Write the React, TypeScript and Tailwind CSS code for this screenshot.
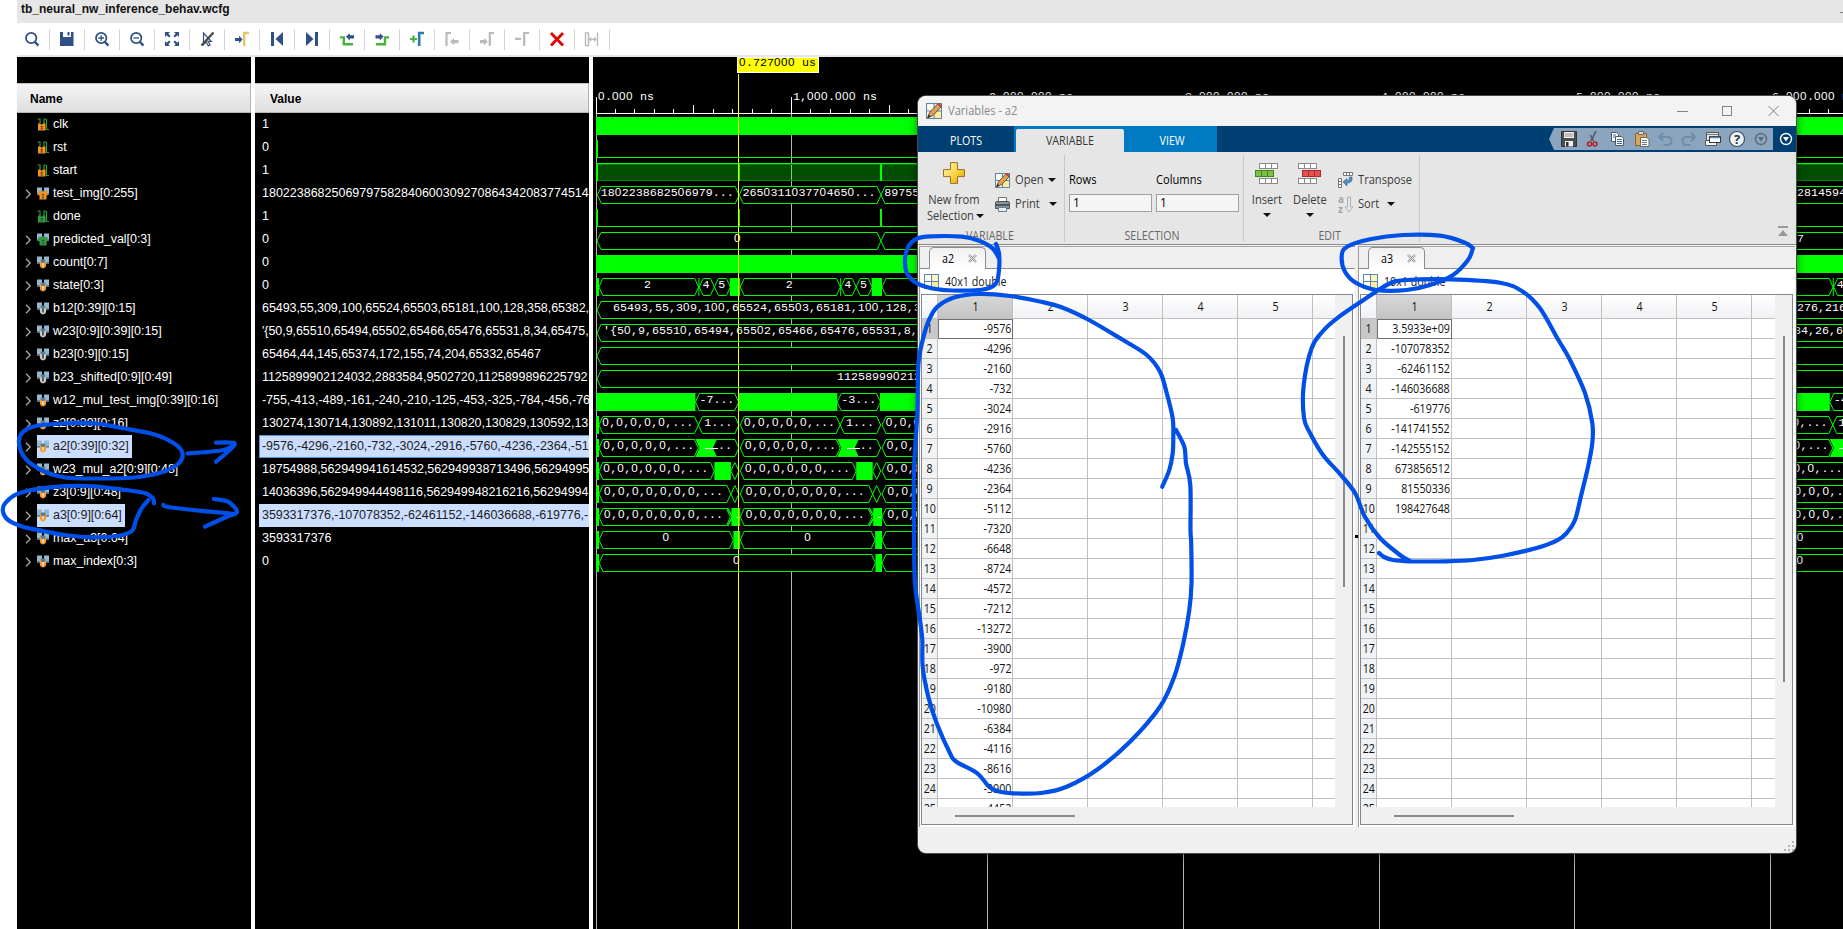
import React from "react";

const GREEN = "#00ff00";

/* ---------- simulator toolbar icons ---------- */

const NAVY = "#2f4f86";
const GREY = "#b9b9b9";

const lens = (
  <>
    <circle cx="7.2" cy="7" r="5.2" fill="none" stroke={NAVY} strokeWidth="1.8" />
    <path d="M11 11l3.4 3.6" stroke={NAVY} strokeWidth="2.4" />
  </>
);

const toolIcons: React.ReactNode[] = [
  lens,
  <>
    <path d="M1 1h3v5h8V1h2.5v14H1z" fill={NAVY} />
    <path d="M8.5 1h2v3.5h-2z" fill={NAVY} />
  </>,
  <>
    {lens}
    <path d="M4.4 7h5.6M7.2 4.2v5.6" stroke={NAVY} strokeWidth="1.3" />
  </>,
  <>
    {lens}
    <path d="M4.4 7h5.6" stroke={NAVY} strokeWidth="1.3" />
  </>,
  <g fill={NAVY}>
    <path d="M1 1h5L4.3 2.7 6.6 5 5 6.6 2.7 4.3 1 6zM15 1v5l-1.7-1.7L11 6.6 9.4 5l2.3-2.3L10 1zM1 15v-5l1.7 1.7L5 9.4 6.6 11l-2.3 2.3L6 15zM15 15h-5l1.7-1.7L9.4 11 11 9.4l2.3 2.3L15 10z" />
  </g>,
  <>
    <path d="M4.5 2v11.5l2.8-2.6 2 4 1.8-.9-2-3.7h3.2z" fill="none" stroke={NAVY} strokeWidth="1.2" />
    <path d="M14.5 1.5L2.5 14.500" stroke="#4a4a4a" strokeWidth="2.400" />
  </>,
  <>
    <path d="M1 7h4V4.8L8.6 8.5 5 12.2V10H1z" fill={NAVY} />
    <path d="M10.2 15V2H15" fill="none" stroke="#e3c766" strokeWidth="2.4" />
  </>,
  <>
    <path d="M2 1h3v14H2z" fill={NAVY} />
    <path d="M14 1v14L6.5 8z" fill={NAVY} />
  </>,
  <>
    <path d="M11 1h3v14h-3z" fill={NAVY} />
    <path d="M2 1v14l7.500-7z" fill={NAVY} />
  </>,
  <>
    <path d="M1 6.400h3.800v6.800H14" fill="none" stroke="#46b43c" strokeWidth="2.4" />
    <path d="M7 5.600l3.800-3.400v2H15v3.200h-4.200v2z" fill={NAVY} />
  </>,
  <>
    <path d="M2 13.200h9V6.400h4" fill="none" stroke="#46b43c" strokeWidth="2.4" />
    <path d="M9.500 5.600L5.800 2.200v2H1.500v3.200h4.300v2z" fill={NAVY} />
  </>,
  <>
    <path d="M1 8h7M4.500 4.600v6.800" stroke="#46b43c" strokeWidth="2.2" />
    <path d="M10.200 15V2H15" fill="none" stroke="#2a7ab5" strokeWidth="2.6" />
  </>,
  <>
    <path d="M2.500 15V2H7" fill="none" stroke={GREY} strokeWidth="2.2" />
    <path d="M6 10.500l4-3.600v2h4.500v3.400H10v2z" fill={GREY} />
  </>,
  <>
    <path d="M10.800 15V2H15" fill="none" stroke={GREY} strokeWidth="2.2" />
    <path d="M8.800 10.500L5 6.900v2H1v3.400h4v2z" fill={GREY} />
  </>,
  <>
    <path d="M10.200 15V2H15M1 7.800h6" fill="none" stroke={GREY} strokeWidth="2.2" />
  </>,
  <path d="M2 2l12 12.500M14 2L2 14.500" stroke="#e60000" strokeWidth="2.800" />,
  <>
    <path d="M1.500 2h3v12.500h-3zM13.500 1.500v13.500" fill="none" stroke={GREY} strokeWidth="1.4" />
    <path d="M5.500 8.300h6M7.300 6.300l-2 2 2 2M10 6.300l2 2-2 2" fill="none" stroke={GREY} strokeWidth="1.2" />
  </>,
];

function Toolbar() {
  return (
    <div className="flex h-[32px] shrink-0 items-center bg-white">
      {toolIcons.map((icon, i) => (
        <div
          key={i}
          className={`flex h-[21px] shrink-0 items-center justify-center border-r border-[#d4d4d4] ${i === 0 ? "w-[33px] pr-[3px]" : "w-[35px]"}`}
        >
          <svg width="16" height="16" viewBox="0 0 16 16">
            {icon}
          </svg>
        </div>
      ))}
    </div>
  );
}

/* ---------- signal list ---------- */

type Kind = "in" | "out" | "busIn" | "busOut" | "busReg" | "busConst";

interface Signal {
  name: string;
  value: string;
  kind: Kind;
  selected?: boolean;
}

const signals: Signal[] = [
  { name: "clk", value: "1", kind: "in" },
  { name: "rst", value: "0", kind: "in" },
  { name: "start", value: "1", kind: "in" },
  { name: "test_img[0:255]", value: "18022386825069797582840600309270864342083774514", kind: "busIn" },
  { name: "done", value: "1", kind: "out" },
  { name: "predicted_val[0:3]", value: "0", kind: "busOut" },
  { name: "count[0:7]", value: "0", kind: "busReg" },
  { name: "state[0:3]", value: "0", kind: "busReg" },
  { name: "b12[0:39][0:15]", value: "65493,55,309,100,65524,65503,65181,100,128,358,65382,", kind: "busConst" },
  { name: "w23[0:9][0:39][0:15]", value: "'{50,9,65510,65494,65502,65466,65476,65531,8,34,65475,", kind: "busConst" },
  { name: "b23[0:9][0:15]", value: "65464,44,145,65374,172,155,74,204,65332,65467", kind: "busConst" },
  { name: "b23_shifted[0:9][0:49]", value: "1125899902124032,2883584,9502720,1125899896225792", kind: "busConst" },
  { name: "w12_mul_test_img[0:39][0:16]", value: "-755,-413,-489,-161,-240,-210,-125,-453,-325,-784,-456,-76", kind: "busReg" },
  { name: "z2[0:39][0:16]", value: "130274,130714,130892,131011,130820,130829,130592,13", kind: "busReg" },
  { name: "a2[0:39][0:32]", value: "-9576,-4296,-2160,-732,-3024,-2916,-5760,-4236,-2364,-51", kind: "busReg", selected: true },
  { name: "w23_mul_a2[0:9][0:48]", value: "18754988,562949941614532,562949938713496,56294995", kind: "busReg" },
  { name: "z3[0:9][0:48]", value: "14036396,562949944498116,562949948216216,56294994", kind: "busReg" },
  { name: "a3[0:9][0:64]", value: "3593317376,-107078352,-62461152,-146036688,-619776,-", kind: "busReg", selected: true },
  { name: "max_a3[0:64]", value: "3593317376", kind: "busReg" },
  { name: "max_index[0:3]", value: "0", kind: "busReg" },
];

function SignalIcon({ kind }: { kind: Kind }) {
  if (kind === "in" || kind === "out") {
    const fill = kind === "in" ? "#f2921d" : "#2f9a3f";
    return (
      <svg width="12" height="13" viewBox="0 0 12 13" className="shrink-0">
        <path d="M0.500 1H3v5M6.500 1h2.500M7 7V1M9.500 1v10.500H12" fill="none" stroke="#2f9a3f" strokeWidth="1.200" />
        <path d="M1 5.500h2l1 1h1l1-1h2.500v7H1z" fill={fill} />
        <path d="M3.500 8.500h2.500M4.750 8.500v2.500M3.500 11h2.500" stroke="#3a3a3a" strokeWidth=".8" />
      </svg>
    );
  }
  return (
    <svg width="12" height="13" viewBox="0 0 12 13" className="shrink-0">
      <path d="M0 .5h5v7H0zM7 .5h5v7H7z" fill="#93b8d0" />
      <path d="M0 6h3v1.500H0zM9 6h3v1.500H9zM4 3.500h4V5H4z" fill="#66818f" />
      {(kind === "busIn" || kind === "busOut") && (
        <>
          <path d="M1.500 4h3l1 1h1l1-1h3v4.500H9.500v4h-7v-4h-1z" fill={kind === "busIn" ? "#f2921d" : "#2f9a3f"} />
          <path d="M4.800 7.500h2.400M6 7.500V11M4.800 11h2.400" stroke="#3f3f3f" strokeWidth=".8" />
        </>
      )}
      {(kind === "busReg" || kind === "busConst") && (
        <>
          <ellipse cx="6" cy="8.600" rx="3.200" ry="3.800" fill={kind === "busReg" ? "#f09a35" : "#c9c9c9"} />
          <path d="M3 4.500h6L6 8z" fill="#5f7480" />
          <rect x="5.200" y="7" width="1.600" height="3.500" fill={kind === "busReg" ? "#ffdfa8" : "#444"} />
        </>
      )}
    </svg>
  );
}

function HeaderCell({ label, pad }: { label: string; pad: string }) {
  return (
    <div
      className={`flex h-[30px] shrink-0 items-center border-t border-r border-b border-t-[#c4c4c4] border-r-[#b5b5b5] border-b-[#b5b5b5] bg-linear-to-b from-[#f4f4f4] to-[#dfdfe1] pt-[2px] text-[12px] font-bold text-black ${pad}`}
    >
      {label}
    </div>
  );
}

function SignalNames() {
  return (
    <div className="flex w-[234px] shrink-0 flex-col bg-black pt-[26px]">
      <HeaderCell label="Name" pad="pl-[13px]" />
      {signals.map((s) => (
        <div key={s.name} className="flex h-[23px] shrink-0 items-center pl-[8px]">
          <svg width="7" height="10" viewBox="0 0 7 10" className="mr-[5px] shrink-0">
            {s.kind !== "in" && s.kind !== "out" && (
              <path d="M1 .8L5.200 5 1 9.200" fill="none" stroke="#a8a8a8" strokeWidth="1.300" />
            )}
          </svg>
          <div
            className={`flex h-[23px] items-center pr-[3px] text-[12.5px] tracking-[-0.06px] whitespace-nowrap ${s.selected ? "bg-[#ccdeff] text-[#1c1c1c]" : "text-white"}`}
          >
            <SignalIcon kind={s.kind} />
            <span className="ml-[4px]">{s.name}</span>
          </div>
        </div>
      ))}
    </div>
  );
}

function SignalValues() {
  return (
    <div className="flex w-[334px] shrink-0 flex-col overflow-hidden bg-black pt-[26px]">
      <HeaderCell label="Value" pad="pl-[15px]" />
      {signals.map((s, i) => (
        <div
          key={s.name}
          className={`ml-[4px] flex h-[23px] shrink-0 items-center overflow-hidden text-[12.5px] whitespace-nowrap ${
            s.value.includes(",") ? "tracking-[-0.06px]" : ""
          } ${s.selected ? "bg-[#ccdeff] text-[#1c1c1c]" : "text-white"} ${
            i === 14 ? "border border-r-0 border-[#4f94d4] pl-[2px]" : "pl-[3px]"
          }`}
        >
          {s.value}
        </div>
      ))}
    </div>
  );
}

/* ---------- waveform ---------- */

const laneTop = (i: number) => 117 + 23 * i;
const cycle = (k: number) => 597.4 + 141.800 * k;
const cycles = [0, 1, 2, 3, 4, 5, 6, 7, 8];

function Mono({ x, y, children, fill = "#fff" }: { x: number; y: number; children: string; fill?: string }) {
  return (
    <text x={x} y={y} fill={fill} fontSize="11.667" fontFamily="'Liberation Mono', monospace" xmlSpace="preserve">
      {children.split(/(0+)/).map((part, i) =>
        part.startsWith("0") ? (
          <tspan key={i} fontFamily="'Liberation Sans', sans-serif" fontSize="11.667" letterSpacing="0.512">
            {part}
          </tspan>
        ) : (
          part
        ),
      )}
    </text>
  );
}

function Hex({ lane, a, b, label, at }: { lane: number; a: number; b: number; label?: string; at?: number }) {
  const t = laneTop(lane) + 0.5;
  const bt = t + 17;
  const m = t + 8.5;
  const s = Math.min(4, (b - a) / 2);
  return (
    <>
      <path
        d={`M${a} ${m}L${a + s} ${t}H${b - s}L${b} ${m}L${b - s} ${bt}H${a + s}Z`}
        fill="#000"
        stroke={GREEN}
        strokeWidth="1"
      />
      {label && (
        <Mono x={at ?? a + 4} y={laneTop(lane) + 10}>
          {label}
        </Mono>
      )}
    </>
  );
}

function Block({ lane, a, b }: { lane: number; a: number; b: number }) {
  return <rect x={a} y={laneTop(lane)} width={b - a} height="18" fill={GREEN} />;
}

const imgLabels = ["1802238682506979...", "2650311037704650...", "8975580361244107..."];

function Cycle({ k }: { k: number }) {
  const c = cycle(k);
  const n = cycle(k + 1);
  const h = c + (k === 0 ? 1.5 : 1);
  const w = (o: number) => c + o;
  return (
    <>
      <Hex lane={3} a={c} b={n} label={imgLabels[k]} at={c + 3.3} />

      <Hex lane={7} a={h} b={w(101.300)} label="2" at={w(46.5)} />
      <Hex lane={7} a={w(101.800)} b={w(117)} label="4" at={w(105)} />
      <Hex lane={7} a={w(117)} b={w(133)} label="5" at={w(120.800)} />
      <rect x={w(101)} y={laneTop(7)} width="1" height="18" fill={GREEN} />
      <Block lane={7} a={w(132.5)} b={n + 1} />

      <Block lane={12} a={c - 1} b={w(98)} />
      <Hex lane={12} a={w(98)} b={n - 0.5} label={k === 0 ? "-7..." : k === 8 ? "-4..." : "-3..."} at={w(102)} />

      <Hex lane={13} a={h} b={w(101)} label="0,0,0,0,0,..." at={w(4.800)} />
      <Hex lane={13} a={w(101)} b={n - 0.3} label="1..." at={w(106.800)} />

      <Hex lane={14} a={h} b={w(101)} label="0,0,0,0,0,..." at={w(5.800)} />
      <Hex lane={14} a={w(115)} b={n - 0.3} label=".." at={w(120.500)} />
      <path
        d={`M${w(98)} ${laneTop(14)}H${w(119)}L${w(115)} ${laneTop(14) + 9}L${w(119)} ${laneTop(14) + 18}H${w(98)}L${w(102)} ${laneTop(14) + 9}Z`}
        fill={GREEN}
      />
      <rect x={Math.round(w(107.5))} y={laneTop(14) + 9} width="13" height="1" fill="#fff" />

      <Hex lane={15} a={h} b={w(117)} label="0,0,0,0,0,0,..." at={w(5.800)} />
      <Block lane={15} a={w(117)} b={w(133.5)} />
      <Hex lane={15} a={w(133.5)} b={n - 0.3} />

      <Hex lane={16} a={h} b={w(133.5)} label="0,0,0,0,0,0,0,..." at={w(6.600)} />
      <Hex lane={16} a={w(133.5)} b={n - 0.3} />

      <Hex lane={17} a={h} b={w(133)} label="0,0,0,0,0,0,0,..." at={w(6.600)} />
      <path
        d={`M${w(130)} ${laneTop(17)}L${w(135)} ${laneTop(17) + 9}L${w(130)} ${laneTop(17) + 18}`}
        fill="none"
        stroke={GREEN}
        strokeWidth="1.500"
      />
      <Block lane={17} a={w(134)} b={n + 1} />
      <rect x={w(139)} y={laneTop(17) + 9} width="2.500" height="1" fill="#fff" />

      <Hex lane={18} a={h} b={w(136)} label="0" at={w(65)} />
      <Block lane={18} a={w(136)} b={n + 1} />
    </>
  );
}

function Waveform() {
  const full = 1850;
  return (
    <svg width="1250" height="872" viewBox="593 57 1250 872" className="block shrink-0 bg-black">
      {[0, 1, 2, 3, 4, 5, 6].map((i) => {
        const x = Math.floor(596.2 + 195.700 * i);
        return (
          <g key={i}>
            <rect x={x} y="114" width="1" height="815" fill="#b4b4b4" />
            <rect x={x} y="97" width="1" height="17" fill="#fff" />
            <Mono x={x + 2} y={100}>{i === 0 ? "0.000 ns" : `${i},000.000 ns`}</Mono>
            {[1, 2, 3, 4, 5, 6, 7, 8, 9].map((j) => (
              <rect
                key={j}
                x={Math.floor(595.700 + 195.700 * i + 19.570 * j)}
                y={j === 5 ? 105 : 109}
                width="1"
                height={j === 5 ? 8 : 4}
                fill="#fff"
              />
            ))}
          </g>
        );
      })}
      <rect x="596" y="113" width="1247" height="1" fill="#fff" />

      <Block lane={0} a={596} b={full} />

      <Block lane={1} a={596} b={598} />
      <rect x="596" y={laneTop(1) + 17} width={full} height="1" fill={GREEN} />

      <rect x="598" y={laneTop(2)} width={full} height="18" fill={GREEN} fillOpacity="0.3" />
      <rect x="598" y={laneTop(2) + 1} width={full} height="1" fill="#008a00" />
      <rect x="598" y={laneTop(2) + 17} width={full} height="1" fill="#008a00" />
      <rect x="598" y={laneTop(2)} width={full} height="1" fill={GREEN} />
      <Block lane={2} a={596} b={598} />

      <Block lane={4} a={596} b={598} />
      <rect x="596" y={laneTop(4) + 17} width={full} height="1" fill={GREEN} />
      {cycles.slice(1).map((k) => (
        <g key={k}>
          <Block lane={2} a={Math.round(cycle(k)) - (k === 1 ? 0 : 1)} b={Math.round(cycle(k)) + 1} />
          <Block lane={4} a={Math.round(cycle(k)) - (k === 1 ? 0 : 1)} b={Math.round(cycle(k)) + 1} />
        </g>
      ))}

      <Block lane={6} a={596} b={full} />

      {cycles.map((k) => (
        <Cycle key={k} k={k} />
      ))}
      <Mono x={1797} y={laneTop(3) + 10}>2814594</Mono>

      <Hex lane={5} a={597} b={cycle(2)} label="0" at={734} />
      <Hex lane={5} a={cycle(2)} b={full} label="7" at={1797} />

      <Hex lane={8} a={597} b={full} label="65493,55,309,100,65524,65503,65181,100,128,358,6" at={613} />
      <Mono x={1797} y={laneTop(8) + 10}>276,216</Mono>
      <Hex lane={9} a={597} b={full} label="'{50,9,65510,65494,65502,65466,65476,65531,8,34" at={603} />
      <Mono x={1794} y={laneTop(9) + 10}>84,26,63</Mono>
      <Hex lane={10} a={597} b={full} />
      <Hex lane={11} a={597} b={full} label="1125899902124032" at={837} />

      <Hex lane={19} a={599} b={875.5} label="0" at={733} />
      <Block lane={19} a={875.5} b={882} />
      <Hex lane={19} a={882} b={full} label="0" at={1796.5} />

      {[7, 13, 14, 15, 16, 17, 18, 19].map((l) => (
        <Block key={l} lane={l} a={596} b={599} />
      ))}

      <rect x="738" y="74" width="1" height="855" fill="#ffff00" />
      <rect x="737.5" y="57.500" width="81" height="15" fill="#ffff00" stroke="#fff" />
      <Mono x={739} y={66} fill="#000">0.727000 us</Mono>
    </svg>
  );
}

/* ---------- variables window ---------- */

function Caret({ className = "" }: { className?: string }) {
  return (
    <svg width="8" height="4" viewBox="0 0 8 4" className={`shrink-0 ${className}`}>
      <path d="M0 0h8L4 4z" fill="#111" />
    </svg>
  );
}

function GridGlyph({ size, pencil }: { size: number; pencil?: boolean }) {
  return (
    <svg width={size} height={size} viewBox="0 0 15 15" className="shrink-0">
      <rect x=".5" y=".5" width="14" height="14" fill="#fdfdf6" stroke="#5b87ab" />
      <path d="M8 1h6v13H8z" fill="#f8eda0" />
      <path d="M8 1h6v6H8z" fill="#fbf4c4" />
      <path d="M7.500 .5v14M.5 7.500h14" stroke="#5b87ab" />
      {pencil && (
        <>
          <path d="M1.500 13.800l1.800-5L10.800 1l3.200 2.800-7.500 8z" fill="#dfa056" stroke="#5c3d20" strokeWidth=".8" />
          <path d="M10.500 1l1.200-1 3.200 2.300L14 3.800z" fill="#d2504c" stroke="#8c3330" strokeWidth=".5" />
          <path d="M1.500 13.800l1-3 2 2z" fill="#222" />
        </>
      )}
    </svg>
  );
}

const narrow = "inline-block scale-x-[0.89] whitespace-nowrap";

function TitleBar() {
  return (
    <div className="flex h-[30px] shrink-0 items-center bg-[#f3f3f3] pl-[8px]">
      <GridGlyph size={16} pencil />
      <span className={`${narrow} ml-[6px] origin-left text-[12.5px] text-[#8a8a8a]`}>Variables - a2</span>
      <svg width="102" height="12" viewBox="0 0 102 12" className="mr-[17px] ml-auto" fill="none" stroke="#828282">
        <path d="M0 6.500h11" />
        <rect x="45.500" y="1.500" width="9" height="9" />
        <path d="M91.500 1l10 10M101.500 1l-10 10" />
      </svg>
    </div>
  );
}

function QuickAccess() {
  return (
    <svg width="247" height="26" viewBox="1549 126 247 26" className="ml-auto shrink-0">
      <path d="M1554 128h219v22h-219l-5-11z" fill="#8aa5bd" />
      <path d="M1561.500 131.500h15v15h-15z" fill="#4d4d4d" stroke="#333" />
      <path d="M1564 132h10v6h-10z" fill="#f4f4f4" />
      <path d="M1564.500 134h9M1564.500 136h9" stroke="#888" />
      <path d="M1565 141h8v5.500h-8z" fill="#eee" />
      <path d="M1566 142h2.500v4.500h-2.500z" fill="#333" />
      <path d="M1596 131l-5 10M1590.500 135l3 6" stroke="#555" strokeWidth="1.500" />
      <circle cx="1589.500" cy="144" r="2" fill="none" stroke="#b3202a" strokeWidth="1.500" />
      <circle cx="1595" cy="144" r="2" fill="none" stroke="#b3202a" strokeWidth="1.500" />
      <g stroke="#4a5a6c" fill="#fff">
        <path d="M1611.500 132.500h5l2 2v7h-7z" />
        <path d="M1615.500 136.500h6l2 2v7h-8z" />
      </g>
      <path d="M1613 135h3M1613 137h2M1617 139.500h5M1617 141.500h5M1617 143.500h5" stroke="#3f6a9c" />
      <path d="M1635.500 133.500h11v12h-11z" fill="#d9a659" stroke="#8c6630" />
      <path d="M1638.500 131.500h5v3h-5z" fill="#ddd" stroke="#666" />
      <path d="M1640.500 137.500h6l2.500 2v7h-8.500z" fill="#fff" stroke="#666" />
      <path d="M1642 140.500h5M1642 142.500h5M1642 144.500h5" stroke="#777" />
      <g fill="none" stroke="#728ca5" strokeWidth="2">
        <path d="M1663 133l-4 4 4 4M1660 137h7.500q4 0 4 4t-4 4h-4" />
        <path d="M1691 133l4 4-4 4M1694 137h-7.500q-4 0-4 4t4 4h4" />
      </g>
      <path d="M1706.500 132.500h12v10h-12z" fill="#e8e8e8" stroke="#555" />
      <path d="M1705.500 140.500h11v5h-11z" fill="#f4f4f4" stroke="#555" />
      <path d="M1707 134.500h11" stroke="#777" />
      <path d="M1709.500 136.500h11v6h-11z" fill="#fff" stroke="#333" />
      <path d="M1710 137.500h10" stroke="#5d88b5" strokeWidth="1.500" />
      <circle cx="1737" cy="139" r="7.500" fill="#eef2f6" stroke="#3d4f60" strokeWidth="1.200" />
      <text x="1737" y="144" textAnchor="middle" fontSize="13" fontWeight="700" fill="#26394b" fontFamily="'Open Sans', sans-serif">?</text>
      <circle cx="1761" cy="139" r="5.500" fill="none" stroke="#5e6b77" strokeWidth="1.400" />
      <path d="M1758 137h6l-3 4.500z" fill="#5e6b77" />
      <circle cx="1786" cy="139" r="5.500" fill="none" stroke="#fff" strokeWidth="1.400" />
      <path d="M1783 137h6l-3 4.500z" fill="#fff" />
    </svg>
  );
}

function TabStrip() {
  return (
    <div className="flex h-[26px] shrink-0 bg-[#003f73] text-[12px] text-white">
      <div className="flex w-[96px] items-center justify-center pt-[4px]">
        <span className={narrow}>PLOTS</span>
      </div>
      <div className="flex w-[203px] bg-[#007ac2] pt-[3px] pl-[2px]">
        <div className="flex w-[108px] items-center justify-center rounded-t-[2px] bg-[#e6e6e6] text-[#333]">
          <span className={narrow}>VARIABLE</span>
        </div>
        <div className="flex flex-1 items-center justify-center pl-[3px]">
          <span className={narrow}>VIEW</span>
        </div>
      </div>
      <QuickAccess />
    </div>
  );
}

function RowsGlyph({ fill, stroke, shift }: { fill: string; stroke: string; shift: number }) {
  const row = (x: number, y: number, f: string, s: string, h: number) => (
    <>
      <rect x={x} y={y} width="18" height={h} fill={f} stroke={s} />
      <path d={`M${x + 6} ${y}v${h}M${x + 12} ${y}v${h}`} stroke={s} />
    </>
  );
  return (
    <svg width="24" height="22" viewBox="0 0 24 22">
      {row(shift ? 0.5 : 4.5, 0.5, "#fff", "#8a8a8a", 5)}
      {row(shift ? 4.5 : 0.5, 7.5, fill, stroke, 6)}
      {row(shift ? 0.5 : 4.5, 15.5, "#fff", "#8a8a8a", 5)}
    </svg>
  );
}

function NumberField({ label }: { label: string }) {
  return (
    <div className="flex w-[83px] flex-col">
      <span className={`${narrow} origin-left text-[12.5px] leading-[18px] text-black`}>{label}</span>
      <div className="mt-[5px] flex h-[18px] items-center border border-[#a0a0a0] bg-[#f5f5f5] pl-[3px] text-[12px] text-black">1</div>
    </div>
  );
}

function Section({ width, label, children }: { width: string; label: string; children: React.ReactNode }) {
  return (
    <div className={`flex h-[87px] shrink-0 flex-col border-r border-[#c9c9c9] ${width}`}>
      <div className="flex h-[73px]">{children}</div>
      <div className="flex h-[14px] items-center justify-center pt-[2px] pr-[3px] text-[12px] text-[#666]">
        <span className={narrow}>{label}</span>
      </div>
    </div>
  );
}

function Ribbon() {
  return (
    <div className="flex h-[92px] shrink-0 bg-[#e6e6e6] pt-[3px] text-[12.5px] text-[#3c3c3c]">
      <Section width="w-[147px]" label="VARIABLE">
        <div className="flex w-[74px] flex-col items-center pt-[7px] pr-[2px]">
          <svg width="22" height="22" viewBox="0 0 22 22">
            <defs>
              <linearGradient id="gold" x1="0" y1="0" x2="1" y2="1">
                <stop offset="0" stopColor="#fffbd0" />
                <stop offset=".55" stopColor="#f7d23c" />
                <stop offset="1" stopColor="#d99a00" />
              </linearGradient>
            </defs>
            <path d="M7.500 .6h7v7h7v7h-7v7h-7v-7h-7v-7h7z" fill="url(#gold)" stroke="#9c6f1c" />
          </svg>
          <span className={`${narrow} mt-[8px] leading-[16px]`}>New from</span>
          <div className="flex items-center">
            <span className={`${narrow} leading-[16px]`}>Selection</span>
            <Caret />
          </div>
        </div>
        <div className="flex flex-col gap-[6px] pt-[16px] pl-[3px]">
          <div className="flex h-[18px] items-center">
            <GridGlyph size={15} pencil />
            <span className={`${narrow} ml-[5px] w-[33px] origin-left`}>Open</span>
            <Caret />
          </div>
          <div className="flex h-[18px] items-center">
            <svg width="15" height="15" viewBox="0 0 15 15">
              <path d="M3.500 .5h8v5h-8z" fill="#fff" stroke="#777" />
              <path d="M.5 6q0-1.500 1.500-1.500h11q1.500 0 1.500 1.500v5.500H.5z" fill="#8d949b" stroke="#4f555b" />
              <path d="M1 8h13" stroke="#3b4045" strokeWidth="1.500" />
              <path d="M3.500 10.500h8v4h-8z" fill="#e9f1f8" stroke="#6b7c8c" />
            </svg>
            <span className={`${narrow} ml-[5px] w-[34px] origin-left`}>Print</span>
            <Caret />
          </div>
        </div>
      </Section>
      <Section width="w-[179px]" label="SELECTION">
        <div className="flex gap-[4px] pt-[16px] pl-[4px]">
          <NumberField label="Rows" />
          <NumberField label="Columns" />
        </div>
      </Section>
      <Section width="w-[176px]" label="EDIT">
        <div className="flex w-[44px] flex-col items-center pt-[8px] pl-[2px]">
          <RowsGlyph fill="#7cc04a" stroke="#3e8a1d" shift={0} />
          <span className={`${narrow} mt-[7px] leading-[16px]`}>Insert</span>
          <Caret className="mt-[5px]" />
        </div>
        <div className="flex w-[44px] flex-col items-center pt-[8px]">
          <RowsGlyph fill="#e4514e" stroke="#a92b2b" shift={1} />
          <span className={`${narrow} mt-[7px] leading-[16px]`}>Delete</span>
          <Caret className="mt-[5px]" />
        </div>
        <div className="flex flex-col gap-[6px] pt-[16px] pl-[6px]">
          <div className="flex h-[18px] items-center">
            <svg width="16" height="16" viewBox="0 0 16 16">
              <path d="M5.500 .5h9v3h-9zM8.500 .5v3M11.500 .5v3" fill="#fff" stroke="#777" />
              <path d="M.5 6.500h3v9h-3zM.5 9.500h3M.5 12.500h3" fill="#fff" stroke="#777" />
              <path d="M14 5q1 6-5 6v3L5 10l4-3.500V9q3 0 2.500-4z" fill="#4f8fc0" stroke="#2c5f88" strokeWidth=".6" />
            </svg>
            <span className={`${narrow} ml-[4px] origin-left`}>Transpose</span>
          </div>
          <div className="flex h-[18px] items-center">
            <svg width="16" height="17" viewBox="0 0 16 17">
              <text x="0" y="7" fontSize="10" fontWeight="700" fill="#a4a4a4" fontFamily="'Open Sans', sans-serif">a</text>
              <text x="0" y="16.500" fontSize="10" fontWeight="700" fill="#a4a4a4" fontFamily="'Open Sans', sans-serif">z</text>
              <path d="M9.500 1h3v10h2.500L11 16 7 11h2.500z" fill="#e6e6e6" stroke="#b0b0b0" />
            </svg>
            <span className={`${narrow} ml-[4px] w-[29px] origin-left`}>Sort</span>
            <Caret />
          </div>
        </div>
      </Section>
      <svg width="10" height="11" viewBox="0 0 10 11" className="mr-[8px] mb-[7px] ml-auto self-end">
        <path d="M0 0h10v2H0zM5 4l5 6H0z" fill="#999" />
      </svg>
    </div>
  );
}

const a2 = [
  "-9576", "-4296", "-2160", "-732", "-3024", "-2916", "-5760", "-4236", "-2364", "-5112", "-7320", "-6648", "-8724",
  "-4572", "-7212", "-13272", "-3900", "-972", "-9180", "-10980", "-6384", "-4116", "-8616", "-3900", "-4452",
];
const a3 = [
  "3.5933e+09", "-107078352", "-62461152", "-146036688", "-619776", "-141741552", "-142555152", "673856512", "81550336",
  "198427648",
];

function Sheet({ name, size, values, thumb, wide }: { name: string; size: string; values: string[]; thumb: string; wide?: boolean }) {
  return (
    <div className={`flex h-[581px] shrink-0 flex-col border-l border-[#9a9a9a] bg-white ${wide ? "w-[437px]" : "w-[436px]"}`}>
      <div className="flex h-[23px] shrink-0 border-t border-[#a5a5a5] bg-[#efefef]">
        <div className="w-[9px] border-b border-[#8c8c8c]" />
        <div className="flex w-[57px] items-center rounded-t-[5px] border-x border-t border-[#8c8c8c] bg-linear-to-b from-[#f0f0f0] to-white pl-[12px] text-[12px] text-black">
          <span className={`${narrow} w-[26px] origin-left`}>{name}</span>
          <svg width="9" height="9" viewBox="0 0 9 9">
            <path d="M1 1l7 7M8 1L1 8" stroke="#9a9a9a" strokeWidth="2.400" />
            <path d="M1 1l7 7M8 1L1 8" stroke="#efefef" strokeWidth=".8" />
          </svg>
        </div>
        <div className="flex-1 border-b border-[#8c8c8c]" />
      </div>
      <div className="flex h-[25px] shrink-0 items-center pl-[4px]">
        <GridGlyph size={15} />
        <span className={`${narrow} ml-[6px] origin-left text-[12px] text-[#1a1a1a]`}>{size}</span>
      </div>
      <div
        className={`ml-[1px] flex h-[531px] shrink-0 flex-col border border-[#828790] bg-[#f0f0f0] ${wide ? "w-[433px]" : "w-[432px]"}`}
      >
        <div className="flex h-[512px] shrink-0">
          <div className={`h-[512px] shrink-0 overflow-hidden bg-white text-[12px] text-[#111] ${wide ? "w-[414px]" : "w-[413px]"}`}>
            <div className="flex h-[24px]">
              <div className="w-[16px] shrink-0 border-r border-b border-[#c0c0c0] bg-linear-to-b from-white to-[#f0f1f4]" />
              {["1", "2", "3", "4", "5", ""].map((c, i) => (
                <div
                  key={i}
                  className={`flex w-[75px] shrink-0 items-center justify-center border-r border-b border-[#c0c0c0] bg-linear-to-b ${i === 0 ? "from-[#d8d8d8] to-[#c4c4c4]" : "from-white to-[#f0f1f4]"}`}
                >
                  <span className={narrow}>{c}</span>
                </div>
              ))}
            </div>
            {a2.map((_, r) => (
              <div key={r} className="flex h-[20px]">
                <div
                  className={`flex w-[16px] shrink-0 items-center justify-center border-r border-b border-[#c0c0c0] pt-[1px] ${r === 0 ? "bg-[#c8c8c8]" : "bg-[#f0f2f4]"}`}
                >
                  <span className={narrow}>{r + 1}</span>
                </div>
                {[0, 1, 2, 3, 4, 5].map((c) => (
                  <div
                    key={c}
                    className={`flex w-[75px] shrink-0 items-center justify-end border-r border-b border-[#c0c0c0] ${r === 0 && c === 0 ? "outline outline-offset-[-1px] outline-[#707070]" : ""}`}
                  >
                    {c === 0 && <span className={`${narrow} origin-right pr-[1px]`}>{values[r]}</span>}
                  </div>
                ))}
              </div>
            ))}
          </div>
          <div className="flex flex-1 justify-center pt-[41px]">
            <div className={`w-[2px] bg-[#8a8a8a] ${thumb}`} />
          </div>
        </div>
        <div className="mt-[8px] ml-[33px] h-[2px] w-[120px] bg-[#8a8a8a]" />
      </div>
    </div>
  );
}

function VariablesWindow() {
  return (
    <div className="absolute top-[96px] left-[918px] flex h-[757px] w-[878px] flex-col overflow-hidden rounded-[8px] bg-[#f0f0f0] font-['Open_Sans','Noto_Sans',sans-serif] shadow-[0_0_0_1px_#4a4a4a,0_2px_12px_rgba(0,0,0,0.45)]">
      <TitleBar />
      <TabStrip />
      <Ribbon />
      <div className="h-px shrink-0 bg-[#8a8a8a]" />
      <div className="flex shrink-0 gap-[3px] pt-[1px] pl-[1px]">
        <Sheet name="a2" size="40x1 double" values={a2} thumb="h-[251px]" />
        <Sheet name="a3" size="10x1 double" values={a3} thumb="h-[346px]" wide />
      </div>
      <svg width="12" height="12" viewBox="0 0 12 12" className="mt-auto mr-[1px] mb-[1px] ml-auto" fill="#b5b5a5">
        <path d="M9 1h2v2H9zM5 5h2v2H5zM9 5h2v2H9zM1 9h2v2H1zM5 9h2v2H5zM9 9h2v2H9z" />
      </svg>
    </div>
  );
}

/* ---------- pen annotations ---------- */

type Pt = [number, number];

const strokes: Pt[][] = [
  [[44, 471.5], [28.7, 462], [20.5, 450], [20, 436], [32, 427], [61, 423.5], [96, 423.5], [119, 427.5], [153, 434], [175, 444], [182.5, 453.5], [178, 464], [161, 472.5], [134, 477.5], [96, 478.5], [65, 477.5], [44, 471.5], [28.7, 462]],
  [[187.5, 453.5], [224, 450], [234, 443.5]],
  [[216, 442.7], [234.5, 443.3], [226, 453.3], [216, 461.7]],
  [[154, 503.3], [153, 498.3], [145.5, 493.3], [126, 490], [88, 486], [50, 487.3], [19, 493.3], [5, 503.3], [3, 511.7], [8, 520], [23, 526.7], [42, 530.7], [65, 535], [92, 537.3], [118.6, 535.7], [132, 530.7], [136, 520], [141.6, 508.3], [148.5, 500]],
  [[163.4, 505], [168, 507], [199, 510.7], [235, 514]],
  [[214, 499], [228, 501.7], [237, 512], [226, 517], [205, 526.7]],
  [[998.8, 258], [992.6, 248.3], [979, 240.7], [961.7, 236.7], [930.7, 236.3], [917, 238.5], [908.3, 246.7], [905, 260], [907, 273.3], [917, 283.3], [937.5, 289.3], [961.7, 290.7], [985.8, 289], [996, 283.3], [999, 270], [999, 253.3], [996, 244]],
  [[1162.3, 486.7], [1169.3, 470], [1172.7, 453.3], [1173.3, 436.7], [1172.7, 418.3], [1166.7, 393], [1160, 371.7], [1146.7, 355], [1121.8, 339.3], [1089, 320], [1061.5, 307.3], [1041, 301.7], [1010, 296], [979, 294], [954.8, 297.3], [937.5, 306.7], [929, 320], [924, 335], [918.5, 363], [917.3, 413], [914, 470], [914, 530], [915, 583], [920, 620], [922.3, 640], [922.7, 666.7], [928.3, 696.7], [936.7, 723.3], [950, 753.3], [956, 761.5], [977.3, 773.3], [988.3, 786], [996.7, 791], [1013.3, 793.3], [1041, 793], [1066.7, 786.7], [1096.7, 770], [1130, 741.7], [1160, 706.7], [1174.3, 676.7], [1183.3, 643.3], [1189.3, 610], [1191.5, 583.3], [1191.2, 543.3], [1190.5, 530], [1190.3, 485], [1186, 463.3], [1184.3, 446.7], [1176, 430]],
  [[1473, 248.3], [1465, 242.7], [1440, 235.7], [1403, 235], [1370, 239.3], [1346.7, 247], [1341.7, 256.7], [1345, 271.7], [1356.7, 283.3], [1376.7, 290], [1406.7, 290], [1430, 285], [1453, 275], [1468, 260], [1472.7, 249]],
  [[1379, 553], [1384, 557], [1393, 560], [1410, 561.3], [1446.7, 561.3], [1473, 560], [1503, 555.7], [1536.7, 548], [1556.7, 540.7], [1566.7, 533], [1575, 520], [1581.7, 493], [1588, 467], [1592.3, 443], [1592.3, 423], [1585, 393], [1570, 360], [1558, 339.3], [1540, 308.3], [1523, 291.7], [1500, 282.7], [1450, 279.3], [1406.7, 280], [1388.7, 284], [1361, 301.7], [1337, 318.3], [1323, 331], [1311.7, 348], [1303.7, 385], [1304, 418], [1310, 433], [1323, 455], [1340, 474], [1355, 493], [1365, 517], [1380, 538], [1400, 555], [1410, 561]],
];

function smooth(p: Pt[]) {
  let d = `M${p[0][0]} ${p[0][1]}`;
  for (let i = 0; i < p.length - 1; i++) {
    const a = p[i - 1] ?? p[i];
    const b = p[i];
    const c = p[i + 1];
    const e = p[i + 2] ?? c;
    d += `C${b[0] + (c[0] - a[0]) / 6} ${b[1] + (c[1] - a[1]) / 6} ${c[0] - (e[0] - b[0]) / 6} ${c[1] - (e[1] - b[1]) / 6} ${c[0]} ${c[1]}`;
  }
  return d;
}

function Annotations() {
  return (
    <svg width="1843" height="929" viewBox="0 0 1843 929" className="pointer-events-none absolute top-0 left-0">
      <rect x="1355" y="535" width="3" height="3" fill="#000" />
      <g fill="none" stroke="#004fe6" strokeWidth="4.200" strokeLinecap="round" strokeLinejoin="round">
        {strokes.map((s, i) => (
          <path key={i} d={smooth(s)} />
        ))}
      </g>
    </svg>
  );
}

export default function App() {
  return (
    <div className="relative h-[929px] w-[1843px] overflow-hidden bg-white pl-[17px] font-['Liberation_Sans',Arial,sans-serif]">
      <div className="flex h-full flex-col">
        <div className="flex h-[23px] shrink-0 items-start bg-[#e6e6e6] pt-[1px] pl-[4px] text-[12px] leading-[16px] font-bold text-[#111]">
          <span>tb_neural_nw_inference_behav.wcfg</span>
          <div className="mt-[11px] ml-auto h-px w-[3px] bg-[#808080]" />
        </div>
        <Toolbar />
        <div className="h-[2px] shrink-0 bg-[#e6e6e6]" />
        <div className="flex h-[872px] shrink-0">
          <SignalNames />
          <div className="w-[4px] shrink-0 bg-white" />
          <SignalValues />
          <div className="w-[4px] shrink-0 bg-white" />
          <Waveform />
        </div>
      </div>
      <VariablesWindow />
      <Annotations />
    </div>
  );
}
